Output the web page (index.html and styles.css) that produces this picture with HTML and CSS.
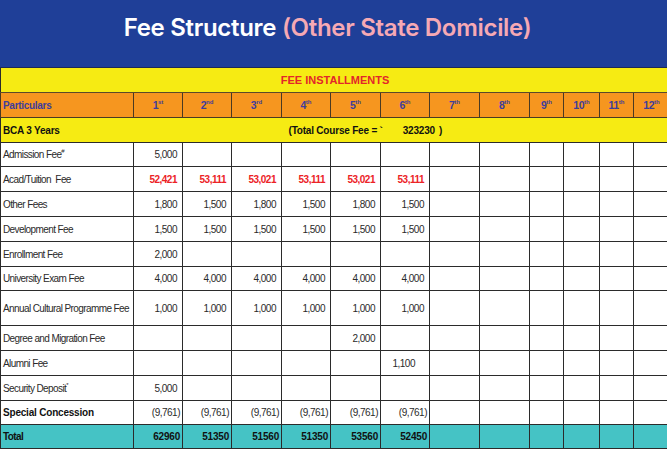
FILE: index.html
```html
<!DOCTYPE html>
<html>
<head>
<meta charset="utf-8">
<link rel="stylesheet" href="styles.css">
</head>
<body>
<div class="page">
  <header class="banner">
    <h1 class="title">Fee Structure <span class="accent">(Other State Domicile)</span></h1>
  </header>
  <table class="fees">
    <colgroup>
      <col class="c-label">
      <col class="c49"><col class="c49"><col class="c50"><col class="c49"><col class="c50">
      <col class="c49"><col class="c50"><col class="c50">
      <col class="c34"><col class="c36"><col class="c34"><col class="c-last">
    </colgroup>
    <tr class="r-title"><td colspan="13">FEE INSTALLMENTS</td></tr>
    <tr class="r-head">
      <td class="lbl">Particulars</td>
      <td>1<sup>st</sup></td><td>2<sup>nd</sup></td><td>3<sup>rd</sup></td><td>4<sup>th</sup></td>
      <td>5<sup>th</sup></td><td>6<sup>th</sup></td><td>7<sup>th</sup></td><td>8<sup>th</sup></td>
      <td>9<sup>th</sup></td><td>10<sup>th</sup></td><td>11<sup>th</sup></td><td>12<sup>th</sup></td>
    </tr>
    <tr class="r-course">
      <td colspan="4" class="course-name">BCA 3 Years</td>
      <td colspan="9" class="course-total">(Total Course Fee = `<span class="sum">323230</span>)</td>
    </tr>
    <tr class="r24"><td class="lbl">Admission Fee<sup>#</sup></td><td>5,000</td><td></td><td></td><td></td><td></td><td></td><td></td><td></td><td></td><td></td><td></td><td></td></tr>
    <tr class="r25 red"><td class="lbl">Acad/Tuition&nbsp; Fee</td><td>52,421</td><td>53,111</td><td>53,021</td><td>53,111</td><td>53,021</td><td>53,111</td><td></td><td></td><td></td><td></td><td></td><td></td></tr>
    <tr class="r25"><td class="lbl">Other Fees</td><td>1,800</td><td>1,500</td><td>1,800</td><td>1,500</td><td>1,800</td><td>1,500</td><td></td><td></td><td></td><td></td><td></td><td></td></tr>
    <tr class="r25"><td class="lbl">Development Fee</td><td>1,500</td><td>1,500</td><td>1,500</td><td>1,500</td><td>1,500</td><td>1,500</td><td></td><td></td><td></td><td></td><td></td><td></td></tr>
    <tr class="r25"><td class="lbl">Enrollment Fee</td><td>2,000</td><td></td><td></td><td></td><td></td><td></td><td></td><td></td><td></td><td></td><td></td><td></td></tr>
    <tr class="r24"><td class="lbl">University Exam Fee</td><td>4,000</td><td>4,000</td><td>4,000</td><td>4,000</td><td>4,000</td><td>4,000</td><td></td><td></td><td></td><td></td><td></td><td></td></tr>
    <tr class="r35"><td class="lbl">Annual Cultural Programme Fee</td><td>1,000</td><td>1,000</td><td>1,000</td><td>1,000</td><td>1,000</td><td>1,000</td><td></td><td></td><td></td><td></td><td></td><td></td></tr>
    <tr class="r25"><td class="lbl">Degree and Migration Fee</td><td></td><td></td><td></td><td></td><td>2,000</td><td></td><td></td><td></td><td></td><td></td><td></td><td></td></tr>
    <tr class="r25"><td class="lbl">Alumni Fee</td><td></td><td></td><td></td><td></td><td></td><td class="mid">1,100</td><td></td><td></td><td></td><td></td><td></td><td></td></tr>
    <tr class="r25"><td class="lbl">Security Deposit<sup>*</sup></td><td>5,000</td><td></td><td></td><td></td><td></td><td></td><td></td><td></td><td></td><td></td><td></td><td></td></tr>
    <tr class="r24 concession"><td class="lbl">Special Concession</td><td>(9,761)</td><td>(9,761)</td><td>(9,761)</td><td>(9,761)</td><td>(9,761)</td><td>(9,761)</td><td></td><td></td><td></td><td></td><td></td><td></td></tr>
    <tr class="r24 total"><td class="lbl">Total</td><td>62960</td><td>51350</td><td>51560</td><td>51350</td><td>53560</td><td>52450</td><td></td><td></td><td></td><td></td><td></td><td></td></tr>
  </table>
</div>
</body>
</html>
```
FILE: styles.css
```css
html, body {
  margin: 0;
  padding: 0;
}
body {
  background: #1f3f98;
  width: 667px;
  height: 449px;
  overflow: hidden;
}
.page {
  width: 667px;
  overflow: hidden;
}
.banner {
  height: 67px;
  display: flex;
  justify-content: center;
  box-sizing: border-box;
  padding-top: 12px;
  padding-right: 12px;
}
.title {
  margin: 0;
  font-family: "Inter", "Open Sans", sans-serif;
  font-weight: 600;
  font-size: 24px;
  line-height: 32px;
  color: #ffffff;
  letter-spacing: -0.3px;
}
.accent {
  color: #f6a9b4;
}
.fees {
  border-collapse: collapse;
  table-layout: fixed;
  width: 669px;
  font-family: "Liberation Sans", Arial, sans-serif;
  font-size: 10px;
  letter-spacing: -0.5px;
  color: #2a2a2a;
  background: #ffffff;
}
.c-label { width: 133px; }
.c49 { width: 49px; }
.c50 { width: 50px; }
.c34 { width: 34px; }
.c36 { width: 36px; }
.c-last { width: 36px; }
.fees td {
  border: 1px solid #2b2b2b;
  padding: 0 5px 0 2px;
  text-align: right;
  vertical-align: middle;
  white-space: nowrap;
  overflow: visible;
}
.fees td.lbl {
  text-align: left;
  padding-left: 2px;
  letter-spacing: -0.6px;
}
.r-title td {
  background: #f6eb13;
  color: #e3262a;
  font-weight: bold;
  font-size: 11px;
  text-align: center;
  height: 24px;
  padding: 0;
  letter-spacing: 0;
  border-top: 1px solid #1e2a55;
  border-bottom: 1px solid #5b4a2a;
}
.r-head td {
  background: #f6961f;
  color: #3e3d9b;
  font-weight: bold;
  font-size: 10.5px;
  text-align: center;
  height: 24px;
  border-color: #4a3a22;
  padding: 0;
}
.r-head td.lbl {
  padding-left: 2px;
  letter-spacing: -0.3px;
  font-size: 10px;
}
.r-head sup {
  font-size: 7.5px;
  vertical-align: 5px;
  line-height: 0;
  letter-spacing: 0;
}
.r-course td {
  background: #f6eb13;
  color: #111111;
  font-weight: bold;
  height: 24px;
  border-left: none;
  border-right: none;
  border-top: 1px solid #2a4a9a;
}
.r-course td.course-name {
  text-align: left;
  padding-left: 2px;
  border-left: 1px solid #2b2b2b;
  letter-spacing: -0.2px;
}
.r-course td.course-total {
  text-align: left;
  padding-left: 7px;
  letter-spacing: -0.2px;
}
.sum {
  margin-left: 20px;
  margin-right: 4px;
}
.r24 td { height: 23px; }
.r25 td { height: 24px; }
.r35 td { height: 34px; }
.fees sup {
  font-size: 6px;
  vertical-align: 5px;
  line-height: 0;
}
.red td {
  color: #ec2226;
  font-weight: bold;
}
.red td.lbl {
  color: #2a2a2a;
  font-weight: normal;
}
td.mid {
  text-align: right;
  padding-right: 14px;
}
.concession td {
  padding-right: 2px;
}
.concession td.lbl {
  font-weight: bold;
  color: #111111;
  letter-spacing: -0.2px;
}
.total td {
  background: #45c3c5;
  font-weight: bold;
  color: #111111;
  padding-right: 2px;
  letter-spacing: -0.2px;
}
```
